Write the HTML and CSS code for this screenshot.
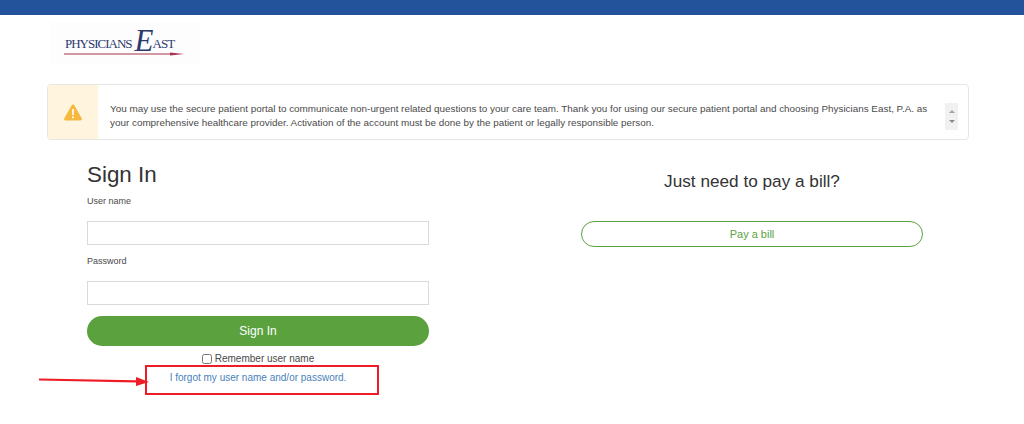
FILE: index.html
```html
<!DOCTYPE html>
<html lang="en">
<head>
    <meta charset="UTF-8">
    <meta name="viewport" content="width=device-width, initial-scale=1.0">
    <title>Sign In</title>
    <link rel="stylesheet" href="styles.css">
</head>
<body>
    <div class="topbar"></div>
    <div class="page">
        <div class="logo">
            <span class="logo-word">PHYSICIANS</span><span class="logo-e">E</span><span class="logo-word">AST</span>
            <svg class="logo-rule" width="120" height="4" viewBox="0 0 120 4"><path d="M0 1.500H106V.5L120 2 106 3.500V2.500H0z" fill="#a8324f"/></svg>
        </div>

        <div class="notice">
            <div class="notice-icon">
                <svg width="18" height="17" viewBox="0 0 18 17"><path d="M9 .5c.6 0 1 .3 1.300.8l7.400 13c.6 1 0 2.200-1.200 2.200H1.500C.3 16.500-.3 15.300.3 14.300l7.400-13C8 .8 8.400.5 9 .5z" fill="#f6b83f"/><rect x="8" y="5" width="2" height="6" fill="#fff4de"/><rect x="8" y="12.300" width="2" height="2" fill="#fff4de"/></svg>
            </div>
            <p class="notice-text">You may use the secure patient portal to communicate non-urgent related questions to your care team. Thank you for using our secure patient portal and choosing Physicians East, P.A. as your comprehensive healthcare provider. Activation of the account must be done by the patient or legally responsible person.</p>
            <div class="scroller">
                <span class="arrow-up"></span>
                <span class="arrow-down"></span>
            </div>
        </div>

        <div class="columns">
            <form class="signin">
                <h1>Sign In</h1>
                <label for="username">User name</label>
                <input type="text" id="username">
                <label for="password">Password</label>
                <input type="password" id="password">
                <button type="button" class="btn-signin">Sign In</button>
                <div class="remember">
                    <input type="checkbox" id="remember">
                    <label for="remember">Remember user name</label>
                </div>
                <a class="forgot" href="#">I forgot my user name and/or password.</a>
            </form>
            <div class="pay">
                <h2>Just need to pay a bill?</h2>
                <button type="button" class="btn-pay">Pay a bill</button>
            </div>
        </div>
    </div>

    <!-- red annotation drawn over the page -->
    <div class="mark-box"></div>
    <svg class="mark-arrow" width="110" height="12" viewBox="0 0 110 12"><path d="M0 2.500L97 4.200V1l13 5-13 4V6.500L0 4.500z" fill="#ee1c25"/></svg>
</body>
</html>
```

FILE: styles.css
```css
body {
    margin: 0;
    font-family: "Liberation Sans", Arial, sans-serif;
    background-color: #fff;
    color: #333;
}
.topbar {
    height: 15px;
    background-color: #23539b;
}
.page {
    padding: 0 55px 0 47px;
}
.logo {
    position: relative;
    width: 150px;
    height: 43px;
    margin: 7px 0 0 3px;
    box-sizing: border-box;
    padding: 12px 0 0 15px;
    background: #fdfdfd;
    color: #2c3a6e;
    font-family: "Liberation Serif", serif;
    white-space: nowrap;
}
.logo-word {
    font-size: 13px;
    letter-spacing: -1px;
}
.logo-e {
    font-size: 31px;
    font-style: italic;
    line-height: 14px;
    margin: 0 -1px 0 3px;
    vertical-align: -3px;
}
.logo-rule {
    position: absolute;
    left: 14px;
    top: 30px;
}
.notice {
    display: flex;
    align-items: center;
    height: 56px;
    margin-top: 19px;
    box-sizing: border-box;
    border: 1px solid #e6e6e6;
    border-radius: 4px;
    overflow: hidden;
}
.notice-icon {
    display: flex;
    align-items: center;
    justify-content: center;
    flex: none;
    width: 50px;
    height: 100%;
    background-color: #fff4de;
}
.notice-text {
    flex: none;
    width: 830px;
    margin: 8px 0 0 12px;
    font-size: 9.880px;
    line-height: 14px;
    color: #4a4a4a;
}
.scroller {
    display: flex;
    flex-direction: column;
    align-items: center;
    justify-content: center;
    gap: 7px;
    flex: none;
    width: 13px;
    height: 27px;
    margin: 9px 0 0 5px;
    background-color: #f1f1f1;
}
.arrow-up, .arrow-down {
    width: 0;
    height: 0;
    border-left: 3px solid transparent;
    border-right: 3px solid transparent;
}
.arrow-up {
    border-bottom: 3px solid #a3a3a3;
}
.arrow-down {
    border-top: 3px solid #8a8a8a;
}
.columns {
    display: flex;
    padding-left: 40px;
    gap: 152px;
}
.signin {
    display: flex;
    flex-direction: column;
    width: 342px;
}
h1 {
    margin: 21px 0 0;
    font-size: 22.400px;
    font-weight: 400;
    line-height: 28px;
}
.signin > label {
    margin-top: 6px;
    font-size: 9px;
    line-height: 12px;
    color: #4a4a4a;
}
.signin > label + input {
    height: 24px;
    margin: 14px 0 10px;
    box-sizing: border-box;
    border: 1px solid #d8dae0;
    background: #fff;
}
.signin > input + label {
    margin-top: 0;
}
.signin > input:last-of-type {
    margin-bottom: 0;
}
.btn-signin {
    height: 30px;
    margin-top: 11px;
    border: none;
    border-radius: 15px;
    background-color: #5ba23f;
    color: #fff;
    font-family: inherit;
    font-size: 12px;
}
.remember {
    display: flex;
    align-items: center;
    justify-content: center;
    gap: 3px;
    margin-top: 6px;
    font-size: 10px;
    line-height: 14px;
    color: #4a4a4a;
}
.remember input {
    width: 10px;
    height: 10px;
    margin: 0;
}
.forgot {
    margin-top: 6px;
    text-align: center;
    font-size: 10px;
    line-height: 12px;
    color: #4a7fbd;
    text-decoration: none;
}
.pay {
    width: 342px;
    text-align: center;
}
h2 {
    margin: 31px 0 0;
    font-size: 17.200px;
    font-weight: 400;
    line-height: 20px;
}
.btn-pay {
    display: block;
    width: 100%;
    height: 26px;
    margin-top: 30px;
    border: 1px solid #5ba23f;
    border-radius: 13px;
    background: #fff;
    color: #5ba23f;
    font-family: inherit;
    font-size: 11px;
}
.mark-box {
    position: absolute;
    left: 145px;
    top: 365px;
    width: 234px;
    height: 30px;
    box-sizing: border-box;
    border: 2px solid #ee1c25;
}
.mark-arrow {
    position: absolute;
    left: 39px;
    top: 376px;
}
```
